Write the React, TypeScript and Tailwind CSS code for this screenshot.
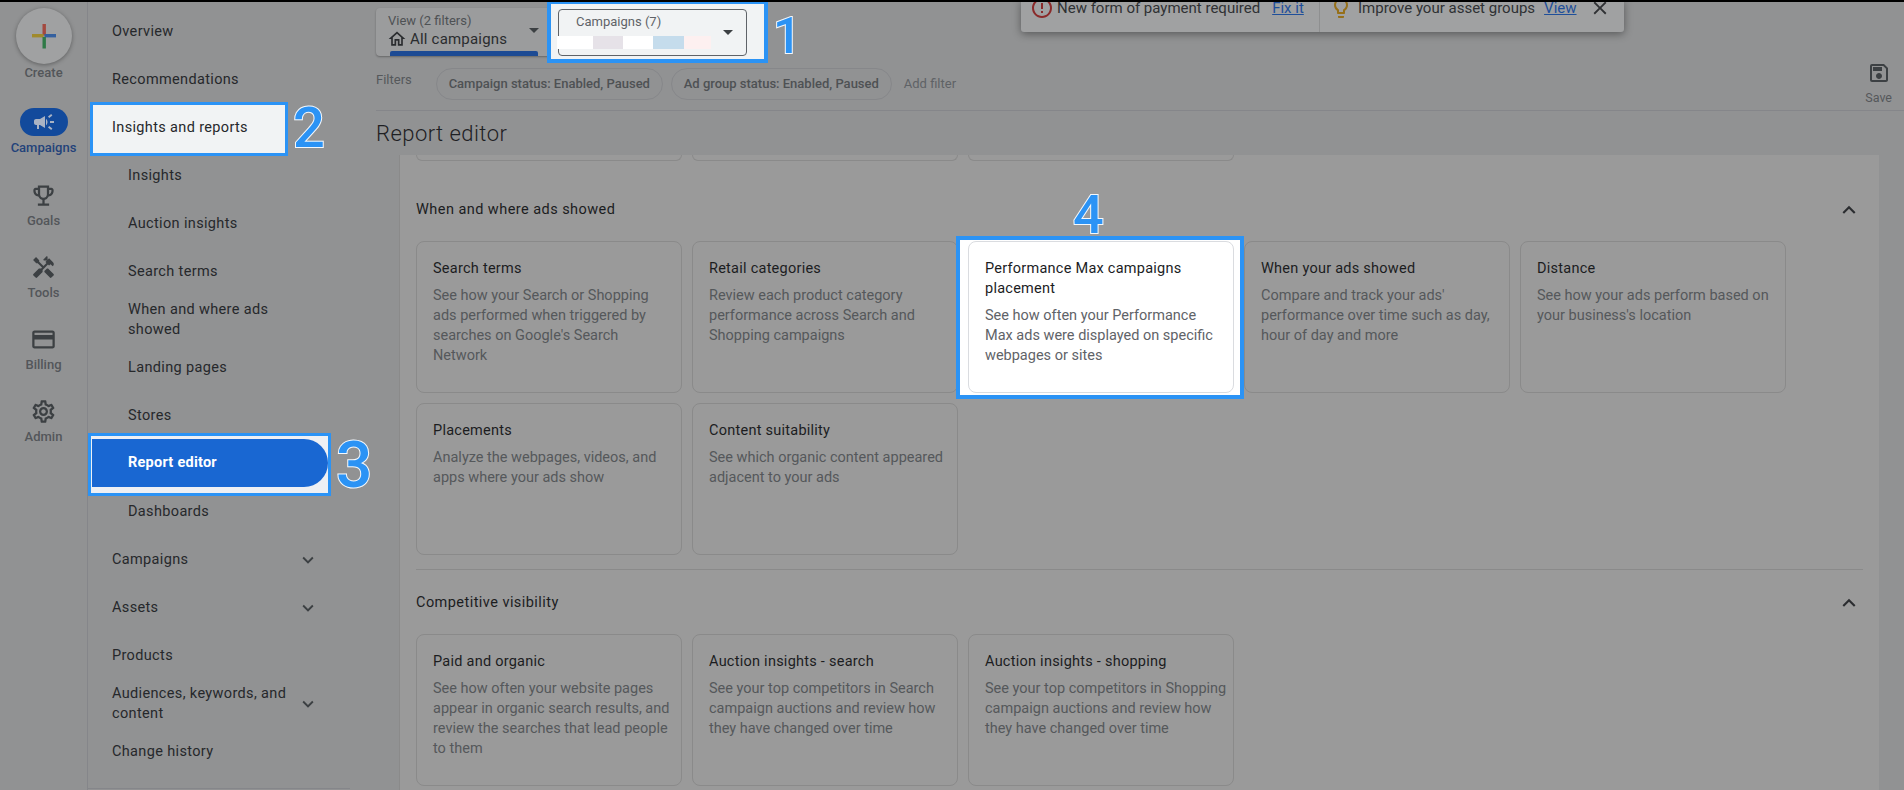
import React from "react";
import {
  MdCampaign, MdOutlineEmojiEvents, MdHandyman, MdOutlineCreditCard, MdOutlineSettings, MdOutlineHome,
  MdOutlineSave, MdErrorOutline, MdOutlineLightbulb, MdExpandMore, MdExpandLess, MdArrowDropDown, MdClose,
} from "react-icons/md";

const Num = ({ n, className }: { n: string; className: string }) => (
  <span className={"absolute font-medium text-[#2b93f5] leading-none [-webkit-text-stroke:2px_#f4f8fc] [paint-order:stroke_fill] z-30 " + className}>{n}</span>
);

const RailItem = ({ icon, label }: { icon: React.ReactNode; label: string }) => (
  <div className="flex flex-col items-center h-[72px]">
    <div className="h-[32px] flex items-center justify-center text-[#3c4043]">{icon}</div>
    <div className="mt-[2px] text-[13px] leading-[16px] font-medium text-[#53565a]">{label}</div>
  </div>
);

const Row = ({ children, sub, chevron }: { children: React.ReactNode; sub?: boolean; chevron?: boolean }) => (
  <div className={"flex items-center h-[48px] w-[231px] text-[14.5px] leading-[20px] tracking-[0.35px] text-[#26282b] " + (sub ? "pl-[40px]" : "pl-[24px]")}>
    <div className={sub ? "w-[160px] shrink-0" : "w-[182px] shrink-0"}>{children}</div>
    {chevron && <MdExpandMore className="ml-auto text-[22px] text-[#3c4043]" />}
  </div>
);

const Card = ({ title, desc, white }: { title: string; desc: React.ReactNode; white?: boolean }) => (
  <div className={"w-[266px] h-[152px] rounded-[8px] border pl-[16px] pr-[4px] pt-[17px] " + (white ? "relative z-20 bg-white border-[#dadce0]" : "border-[#8a8a8a]")}>
    <div className="text-[14.5px] leading-[20px] tracking-[0.25px] text-[#1c1d1f]">{title}</div>
    <div className={"mt-[7px] text-[14.5px] leading-[20px] " + (white ? "text-[#5f6368]" : "text-[#55585b]")}>{desc}</div>
  </div>
);

const Section = ({ title, children }: { title: string; children: React.ReactNode }) => (
  <div>
    <div className="h-[24px] flex items-center justify-between pr-[1px]">
      <div className="text-[14.5px] tracking-[0.45px] text-[#1c1d1f]">{title}</div>
      <MdExpandLess className="text-[26px] text-[#2b2d30]" />
    </div>
    {children}
  </div>
);

export default function App() {
  return (
    <div className="relative w-[1904px] h-[790px] overflow-hidden bg-[#919293] font-['Roboto',sans-serif] border-t-[2px] border-black flex">
      {/* Icon rail */}
      <aside className="w-[88px] shrink-0 border-r border-[#85868a] flex flex-col items-center">
        <div className="mt-[6px] w-[56px] h-[56px] rounded-full bg-[#a0a1a2] shadow-[0_1px_4px_rgba(0,0,0,0.35)] flex items-center justify-center">
          <svg width="26" height="26" viewBox="0 0 26 26">
            <rect x="11.5" y="1" width="3.4" height="11.5" fill="#a3493f" />
            <rect x="1" y="11" width="11.5" height="3.4" fill="#a08a2c" />
            <rect x="13.5" y="11" width="11.5" height="3.4" fill="#34609f" />
            <rect x="11.5" y="14" width="3.4" height="11.5" fill="#2f7a47" />
          </svg>
        </div>
        <div className="mt-[1px] text-[13px] leading-[16px] font-medium text-[#53565a]">Create</div>
        <div className="mt-[27px] flex flex-col items-center h-[71px]">
          <div className="w-[48px] h-[28px] rounded-full bg-[#124a9c] flex items-center justify-center">
            <MdCampaign className="text-[24px] text-[#a9b3c4]" />
          </div>
          <div className="mt-[4px] text-[13px] leading-[16px] font-medium text-[#23427a]">Campaigns</div>
        </div>
        <RailItem icon={<MdOutlineEmojiEvents className="text-[27px]" />} label="Goals" />
        <RailItem icon={<MdHandyman className="text-[25px]" />} label="Tools" />
        <RailItem icon={<MdOutlineCreditCard className="text-[27px]" />} label="Billing" />
        <RailItem icon={<MdOutlineSettings className="text-[27px]" />} label="Admin" />
      </aside>

      {/* Section nav */}
      <nav className="relative w-[288px] shrink-0 pt-[6px]">
        <Row>Overview</Row>
        <Row>Recommendations</Row>
        <div className="relative">
          <div className="absolute left-[2px] -top-[2px] w-[198px] h-[54px] border-[3px] border-[#2b93f5] bg-[#f1f3f4]" />
          <div className="relative"><Row>Insights and reports</Row></div>
          <Num n="2" className="left-[205px] -top-[4px] text-[56px]" />
        </div>
        <Row sub>Insights</Row>
        <Row sub>Auction insights</Row>
        <Row sub>Search terms</Row>
        <Row sub>When and where ads showed</Row>
        <Row sub>Landing pages</Row>
        <Row sub>Stores</Row>
        <div className="relative">
          <div className="absolute left-0 -top-[7px] w-[243px] h-[63px] border-[3px] border-[#2b93f5] bg-[#eef0f4]" />
          <div className="absolute left-[4px] -top-[1px] w-[236px] h-[48px] bg-[#1967d2] rounded-r-[24px]" />
          <div className="relative h-[48px] flex items-center pl-[40px] text-[14.5px] tracking-[0.25px] font-bold text-white -translate-y-[1px]">Report editor</div>
          <Num n="3" className="left-[248px] -top-[6px] text-[64px]" />
        </div>
        <Row sub>Dashboards</Row>
        <Row chevron>Campaigns</Row>
        <Row chevron>Assets</Row>
        <Row>Products</Row>
        <Row chevron>Audiences, keywords, and content</Row>
        <Row>Change history</Row>
        <div className="w-[262px] border-t border-[#85868a] mt-[12px]" />
      </nav>

      {/* Main */}
      <main className="flex-1 min-w-0">
        {/* Toolbar */}
        <div className="relative h-[60px] flex pt-[6px]">
          <div className="relative w-[176px] h-[48px] rounded-[4px] bg-[#9b9c9d] shadow-[0_1px_2px_rgba(0,0,0,0.3)] pl-[12px] pt-[5px]">
            <div className="text-[13px] leading-[16px] text-[#4e5154]">View (2 filters)</div>
            <div className="flex items-center gap-[3px] text-[15px] leading-[20px] tracking-[0.2px] text-[#2a2c2f]">
              <MdOutlineHome className="text-[20px] -ml-[1px]" />All campaigns
            </div>
            <MdArrowDropDown className="absolute left-[146px] top-[10px] text-[24px] text-[#3c4043]" />
            <div className="absolute left-[14px] right-[14px] bottom-0 h-[5px] rounded-t-[2px] bg-[#1d4b94]" />
          </div>
          <div className="absolute left-[171px] -top-[2px] w-[221px] h-[63px] border-[4px] border-[#2b93f5] bg-[#f1f3f4] z-10">
            <div className="relative ml-[7px] mt-[5px] w-[189px] h-[47px] rounded-[4px] border border-[#5f6368] pl-[17px] pt-[4px]">
              <div className="text-[13px] leading-[16px] text-[#5f6368]">Campaigns (7)</div>
              <div className="absolute -left-[2px] top-[26px] flex h-[13px]">
                <div className="w-[36px] bg-white" />
                <div className="w-[30px] bg-[#e6e2e8]" />
                <div className="w-[30px] bg-white" />
                <div className="w-[31px] bg-[#c5dcec]" />
                <div className="w-[27px] bg-[#fdf0f0]" />
              </div>
              <MdArrowDropDown className="absolute left-[157px] top-[10px] text-[24px] text-[#3c4043]" />
            </div>
          </div>
          <Num n="1" className="left-[397px] top-[9px] text-[50px]" />
          {/* Notification */}
          <div className="absolute left-[645px] -top-[2px] w-[603px] h-[32px] bg-[#a0a1a2] rounded-b-[3px] shadow-[0_2px_8px_rgba(0,0,0,0.4)] flex items-center text-[15px] text-[#2f3134] overflow-hidden z-10">
            <div className="w-[299px] shrink-0 flex items-center border-r border-[#8e8f90] h-full pb-[16px]">
              <MdErrorOutline className="ml-[9px] text-[24px] text-[#8a2a2a] shrink-0" />
              <span className="ml-[3px] whitespace-nowrap">New form of payment required</span>
              <span className="ml-[12px] underline text-[#1f4f9a] whitespace-nowrap">Fix it</span>
            </div>
            <div className="flex items-center h-full pb-[16px]">
              <MdOutlineLightbulb className="ml-[9px] text-[24px] text-[#96701a] shrink-0" />
              <span className="ml-[5px] whitespace-nowrap">Improve your asset groups</span>
              <span className="ml-[9px] underline text-[#1f4f9a] whitespace-nowrap">View</span>
              <MdClose className="ml-[12px] text-[22px] text-[#2f3134]" />
            </div>
          </div>
        </div>

        {/* Filters */}
        <div className="relative h-[49px] flex items-start border-b border-[#85868a]">
          <span className="mt-[10px] text-[13px] leading-[16px] text-[#55585b]">Filters</span>
          <span className="ml-[24px] mt-[6px] h-[32px] w-[227px] rounded-full border border-[#86878a] flex items-center justify-center text-[13px] font-medium text-[#4e5154] whitespace-nowrap">Campaign status: Enabled, Paused</span>
          <span className="ml-[8px] mt-[6px] h-[32px] w-[221px] rounded-full border border-[#86878a] flex items-center justify-center text-[13px] font-medium text-[#4e5154] whitespace-nowrap">Ad group status: Enabled, Paused</span>
          <span className="ml-[12px] mt-[14px] text-[13px] leading-[16px] text-[#5f6266]">Add filter</span>
          <div className="ml-auto mr-[12px] flex flex-col items-center">
            <MdOutlineSave className="text-[24px] text-[#3c4043] -mt-[1px]" />
            <span className="mt-[5px] text-[12.5px] leading-[16px] text-[#55585b]">Save</span>
          </div>
        </div>

        {/* Heading */}
        <div className="h-[44px] flex items-center text-[22px] font-light tracking-[0.45px] text-[#1e2023] pt-[1px]">Report editor</div>

        {/* Panel */}
        <div className="relative ml-[23px] mr-[25px] bg-[#9a9a9a] border-l border-[#8a8a8a] h-[640px] px-[16px]">
          <div className="flex gap-[10px]">
            {[0, 1, 2].map((i) => (
              <div key={i} className="w-[266px] h-[6px] rounded-b-[8px] border border-t-0 border-[#8a8a8a]" />
            ))}
          </div>
          <div className="mt-[37px]">
            <Section title="When and where ads showed">
              <div className="relative mt-[19px]">
                <div className="absolute left-[540px] -top-[5px] w-[288px] h-[163px] border-[4px] border-[#2b93f5] bg-white z-10" />
                <Num n="4" className="left-[657px] -top-[53px] text-[54px]" />
                <div className="grid grid-cols-[repeat(5,266px)] gap-[10px]">
                  <Card title="Search terms" desc={<>See how your Search or Shopping<br />ads performed when triggered by<br />searches on Google's Search<br />Network</>} />
                  <Card title="Retail categories" desc="Review each product category performance across Search and Shopping campaigns" />
                  <Card white title="Performance Max campaigns placement" desc={<>See how often your Performance<br />Max ads were displayed on specific<br />webpages or sites</>} />
                  <Card title="When your ads showed" desc="Compare and track your ads' performance over time such as day, hour of day and more" />
                  <Card title="Distance" desc="See how your ads perform based on your business's location" />
                  <Card title="Placements" desc="Analyze the webpages, videos, and apps where your ads show" />
                  <Card title="Content suitability" desc="See which organic content appeared adjacent to your ads" />
                </div>
              </div>
            </Section>
          </div>
          <div className="mt-[14px] border-t border-[#8a8a8a] pt-[21px]">
            <Section title="Competitive visibility">
              <div className="mt-[19px] grid grid-cols-[repeat(5,266px)] gap-[10px]">
                <Card title="Paid and organic" desc="See how often your website pages appear in organic search results, and review the searches that lead people to them" />
                <Card title="Auction insights - search" desc="See your top competitors in Search campaign auctions and review how they have changed over time" />
                <Card title="Auction insights - shopping" desc="See your top competitors in Shopping campaign auctions and review how they have changed over time" />
              </div>
            </Section>
          </div>
        </div>
      </main>
    </div>
  );
}
